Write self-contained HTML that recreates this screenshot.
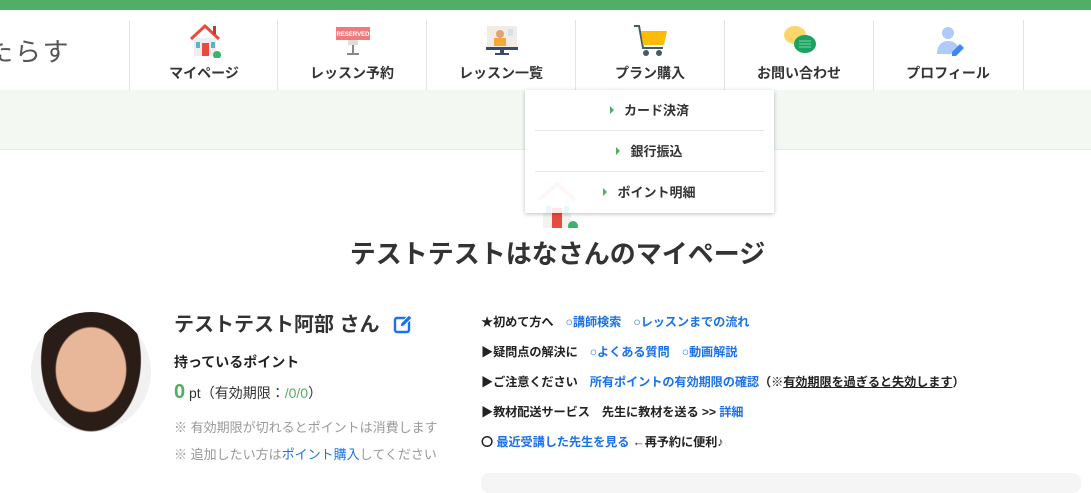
<!DOCTYPE html>
<html><head><meta charset="utf-8"><style>
*{margin:0;padding:0;box-sizing:border-box}
body{width:1091px;height:480px;overflow:hidden;background:#fff;font-family:"Liberation Sans","Noto Sans CJK JP",sans-serif;color:#333;position:relative}
.top{position:absolute;left:0;top:0;width:1091px;height:10px;background:#52ad65}
.hdr{position:absolute;left:0;top:10px;width:1091px;height:80px;background:#fff}
.logo{position:absolute;left:-13px;top:22px;font-size:26px;color:#555;letter-spacing:2px}
.nav{position:absolute;top:20px;height:70px;width:149px;border-left:1px solid #e4e4e4;text-align:center}
.nav span{position:absolute;left:0;right:0;top:43px;font-size:14px;font-weight:bold;color:#333}
.nav svg{position:absolute;left:57px;top:2px}
.band{position:absolute;left:0;top:90px;width:1091px;height:60px;background:#f3f8f3;border-bottom:1px solid #e8ece8}
.card{position:absolute;left:0;top:150px;width:1091px;height:330px;background:#fff;border-top-left-radius:8px}
.dd{position:absolute;left:525px;top:90px;width:249px;height:123px;background:rgba(255,255,255,.88);box-shadow:0 1px 4px rgba(0,0,0,.25);z-index:5}
.dd div{height:41px;margin:0 10px;border-bottom:1px solid #e6e6e6;text-align:center;line-height:41px;font-size:13px;font-weight:bold;color:#333}
.dd div:last-child{border:none}
.dd b{display:inline-block;width:0;height:0;border-left:4px solid #52ad65;border-top:4px solid transparent;border-bottom:4px solid transparent;margin-right:10px;vertical-align:1px}
h1{position:absolute;left:0;width:1115px;text-align:center;top:234px;font-size:26px;font-weight:bold;color:#333}
.av{position:absolute;left:31px;top:312px;width:120px;height:120px;border-radius:50%;background:radial-gradient(ellipse 30% 36% at 50% 48%,#e8b79a 0 96%,transparent 100%),radial-gradient(ellipse 42% 60% at 50% 40%,#2a1c17 0 98%,transparent 100%),#f1f1f1;overflow:hidden}
.name{position:absolute;left:174px;top:308px;font-size:20px;font-weight:bold;color:#333}
.r{position:absolute;left:481px;font-size:12.2px;font-weight:bold;color:#222;letter-spacing:-0.1px}
a{color:#1a73e8;text-decoration:none}
.g{color:#999;font-size:13px;position:absolute;left:174px}
</style></head><body>
<div class="top"></div>
<div class="hdr"><div class="logo">たらす</div></div>
<div class="nav" style="left:129px"><svg width="36" height="36" viewBox="0 0 36 36"><path d="M4 17 18 4 32 17" fill="none" stroke="#e74c3c" stroke-width="3"/><rect x="26" y="4" width="3" height="8" fill="#c0392b"/><rect x="7" y="16" width="22" height="18" fill="#eee"/><rect x="15" y="21" width="7" height="13" fill="#e74c3c"/><rect x="9" y="20" width="4" height="6" fill="#5ab4d0"/><rect x="24" y="20" width="4" height="6" fill="#5ab4d0"/><circle cx="30" cy="33" r="4" fill="#3bb36a"/></svg><span>マイページ</span></div>
<div class="nav" style="left:277px"><svg width="36" height="36" viewBox="0 0 36 36"><rect x="1" y="5" width="34" height="13" fill="#f07a7a"/><text x="18" y="14" font-size="6" fill="#fff" text-anchor="middle" font-weight="bold">RESERVED</text><rect x="13" y="18" width="10" height="5" fill="#ddd"/><rect x="17" y="23" width="2" height="8" fill="#888"/><rect x="12" y="31" width="12" height="2" fill="#888"/></svg><span>レッスン予約</span></div>
<div class="nav" style="left:426px"><svg width="36" height="36" viewBox="0 0 36 36"><rect x="3" y="4" width="30" height="22" fill="#f2ece6"/><circle cx="16" cy="12" r="4" fill="#e8a070"/><rect x="10" y="16" width="12" height="8" fill="#f3a93a"/><rect x="24" y="7" width="5" height="7" fill="#cfe3ee"/><rect x="2" y="25" width="32" height="3" fill="#3a4a6a"/><rect x="16" y="28" width="4" height="4" fill="#3a4a6a"/><rect x="11" y="31" width="14" height="2" fill="#3a4a6a"/></svg><span>レッスン一覧</span></div>
<div class="nav" style="left:575px"><svg width="36" height="36" viewBox="0 0 36 36"><path d="M1 4h5l4 22h20" fill="none" stroke="#455a64" stroke-width="2"/><path d="M8 9h26l-3 14H10z" fill="#fbbc05"/><circle cx="13" cy="31" r="3" fill="#455a64"/><circle cx="26" cy="31" r="3" fill="#455a64"/></svg><span>プラン購入</span></div>
<div class="nav" style="left:724px"><svg width="36" height="36" viewBox="0 0 36 36"><ellipse cx="13" cy="13" rx="11" ry="9" fill="#fcd56b"/><ellipse cx="23" cy="22" rx="11" ry="9" fill="#1aa260"/><path d="M17 22h12M17 19h12M17 25h12" stroke="#7fd3a8" stroke-width="1"/></svg><span>お問い合わせ</span></div>
<div class="nav" style="left:873px"><svg width="36" height="36" viewBox="0 0 36 36"><circle cx="17" cy="11" r="6" fill="#aecbfa"/><path d="M6 32c0-9 5-13 11-13s9 3 10 6l-7 7z" fill="#aecbfa"/><path d="M21 30l8-8 4 4-8 8h-4z" fill="#4285f4"/></svg><span>プロフィール</span></div>
<div class="nav" style="left:1023px;width:70px"></div>
<div class="band"></div>
<div class="card"></div>
<svg style="position:absolute;left:533px;top:178px" width="48" height="50" viewBox="0 0 48 50"><path d="M6 22 24 6 42 22" fill="none" stroke="#f3b9b0" stroke-width="4"/><rect x="10" y="22" width="28" height="28" fill="#f2f2f2"/><rect x="19" y="30" width="10" height="20" fill="#e74c3c"/><rect x="13" y="28" width="5" height="7" fill="#5ab4d0"/><rect x="31" y="28" width="5" height="7" fill="#5ab4d0"/><circle cx="40" cy="48" r="5" fill="#3bb36a"/></svg>
<div class="dd"><div><b></b>カード決済</div><div><b></b>銀行振込</div><div><b></b>ポイント明細</div></div>
<h1>テストテストはなさんのマイページ</h1>
<div class="av"></div>
<div class="name">テストテスト阿部 さん <svg width="20" height="20" viewBox="0 0 20 20" style="vertical-align:-3px;margin-left:8px"><rect x="2" y="4" width="14" height="14" rx="2" fill="none" stroke="#1a73e8" stroke-width="2.4"/><path d="M7 13l1-4 8-8 3 3-8 8z" fill="#1a73e8" stroke="#fff" stroke-width="1"/></svg></div>
<div style="position:absolute;left:174px;top:352px;font-size:14px;font-weight:bold;color:#222">持っているポイント</div>
<div style="position:absolute;left:174px;top:381px;font-size:14px;color:#333"><span style="color:#52ad65;font-size:20px;font-weight:bold">0</span> pt（有効期限：<span style="color:#52ad65">/0/0</span>）</div>
<div class="g" style="top:417px">※ 有効期限が切れるとポイントは消費します</div>
<div class="g" style="top:444px">※ 追加したい方は<a href="#">ポイント購入</a>してください</div>
<div class="r" style="top:312px">★初めて方へ　<a href="#">○講師検索</a>　<a href="#">○レッスンまでの流れ</a></div>
<div class="r" style="top:342px">▶疑問点の解決に　<a href="#">○よくある質問</a>　<a href="#">○動画解説</a></div>
<div class="r" style="top:372px">▶ご注意ください　<a href="#">所有ポイントの有効期限の確認</a>（※<u>有効期限を過ぎると失効します</u>）</div>
<div class="r" style="top:402px">▶教材配送サービス　先生に教材を送る &gt;&gt; <a href="#">詳細</a></div>
<div class="r" style="top:432px">〇 <a href="#">最近受講した先生を見る</a> ←再予約に便利♪</div>
<div style="position:absolute;left:481px;top:473px;width:600px;height:20px;background:#f5f5f5;border-radius:8px"></div>
</body></html>
